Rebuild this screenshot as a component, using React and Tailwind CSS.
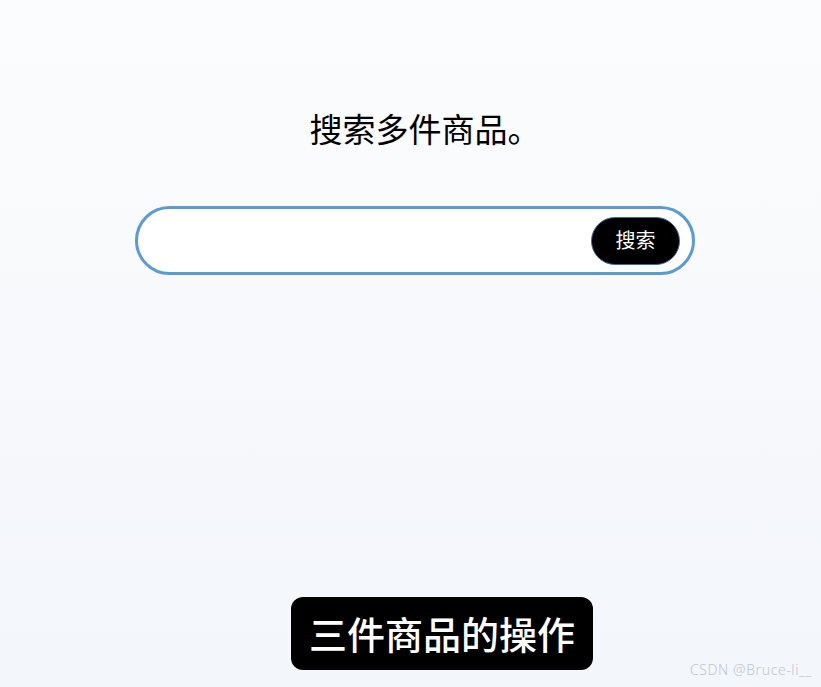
import { useState } from "react";

const App = () => {
  const [query, setQuery] = useState("");

  return (
    <div
      className="relative flex h-[687px] w-full flex-col overflow-hidden bg-gradient-to-b from-[#fbfcfd] to-[#f3f6fb] text-black"
      style={{ fontFamily: '"Noto Sans", "Noto Sans CJK SC", sans-serif' }}
    >
      <h1 className="ml-[135px] w-[560px] pl-[20px] pt-[106px] text-center text-[33px] font-normal leading-[48px]">
        搜索多件商品。
      </h1>

      <div className="ml-[135px] mt-[52px] flex h-[69px] w-[560px] items-center rounded-full border-[3px] border-[#5b9bd5] bg-white pl-6 pr-[12px]">
        <input
          type="text"
          value={query}
          onChange={(event) => setQuery(event.target.value)}
          className="h-full min-w-0 flex-1 bg-transparent text-lg outline-none"
        />
        <button
          type="button"
          className="flex h-[48px] w-[89px] items-center justify-center rounded-full border border-[#3a6ea5] bg-black text-[20px] leading-none text-white"
        >
          搜索
        </button>
      </div>

      <div className="flex-1" />

      <div className="mb-[17px] ml-[291px] flex h-[73px] w-[302px] items-center justify-center rounded-[12px] bg-black">
        <span className="text-[38px] font-medium leading-none text-white">
          三件商品的操作
        </span>
      </div>

      <span className="absolute bottom-[7px] right-[9px] text-[14px] font-light tracking-[0.6px] text-[#c2c6cb]">
        CSDN @Bruce-li__
      </span>
    </div>
  );
};

export default App;
